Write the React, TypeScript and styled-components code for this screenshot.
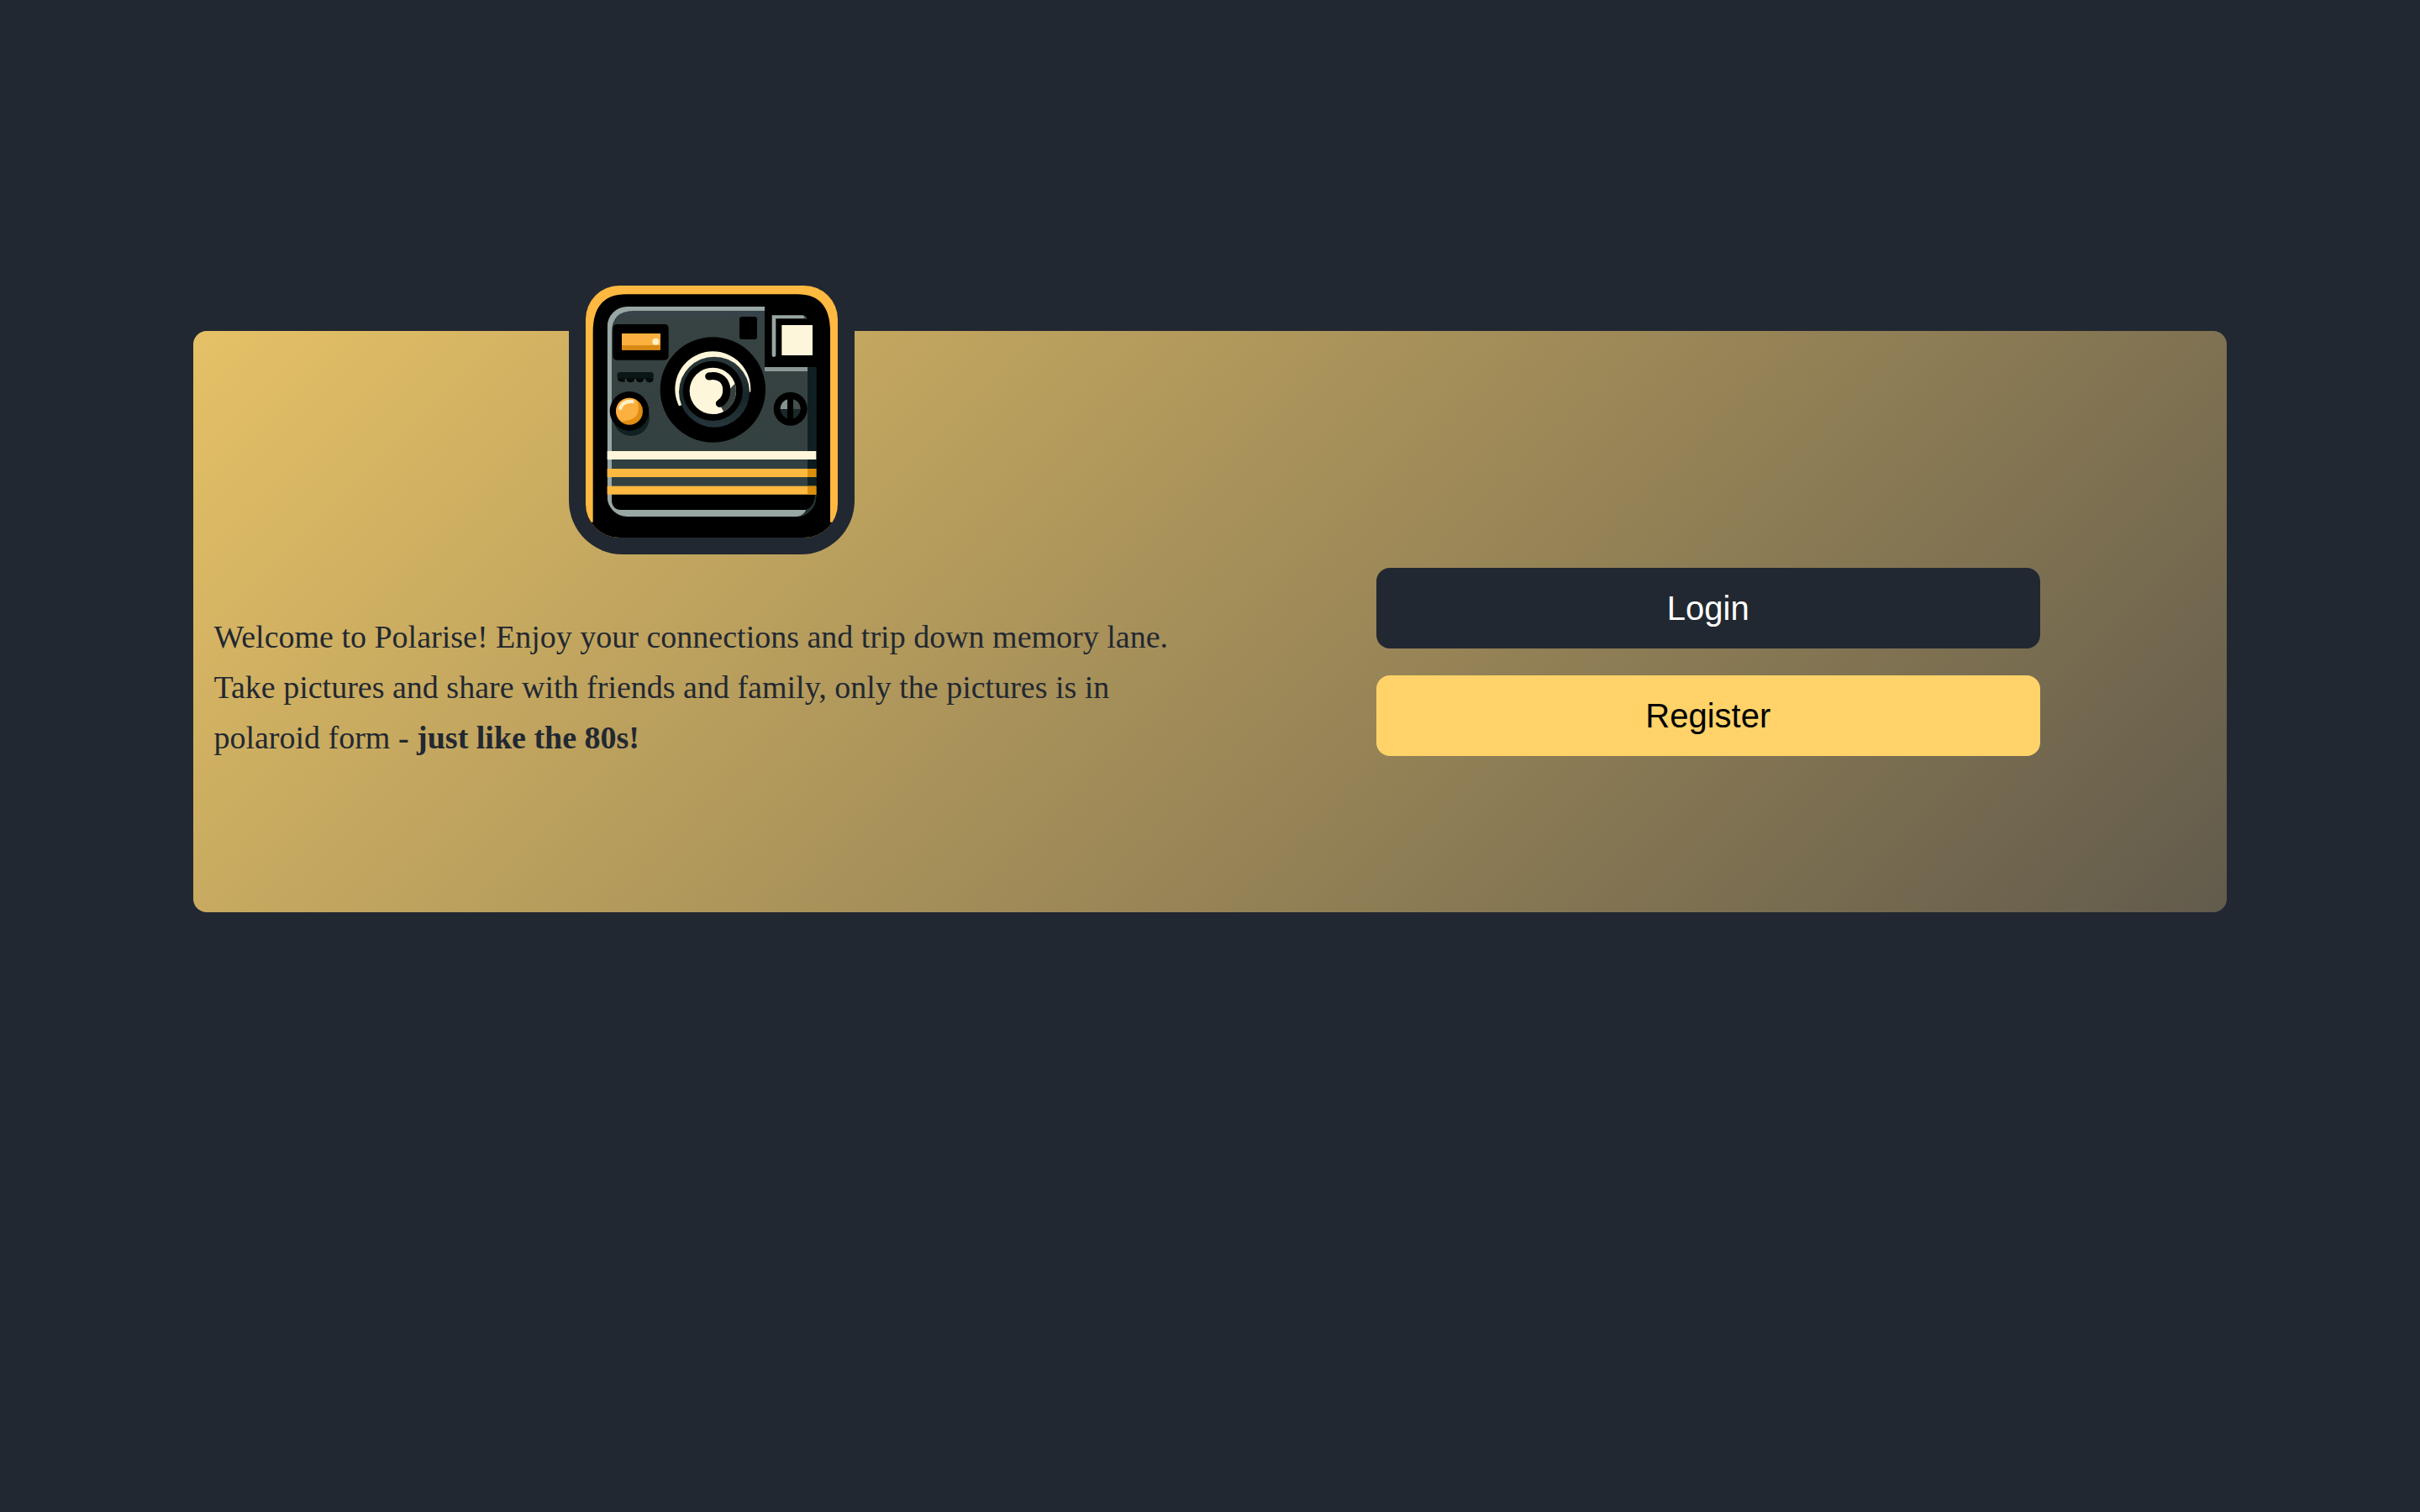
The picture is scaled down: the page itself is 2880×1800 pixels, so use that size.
import React from "react";
import styled, { createGlobalStyle } from "styled-components";

const colors = {
  night: "#222831",
  sun: "#ffd369",
  white: "#ffffff",
  black: "#000000",
};

const GlobalStyle = createGlobalStyle`
  *, *::before, *::after { box-sizing: border-box; }
  body { margin: 0; background: ${colors.night}; }
`;

const Page = styled.main`
  min-height: 100vh;
  padding: 394px 8% 64px;
`;

const Card = styled.section`
  display: grid;
  grid-template-columns: 1fr 1fr;
  padding: 0 24px;
  border-radius: 16px;
  background: linear-gradient(135deg, #e5c166 0%, #625b4c 100%);
`;

const Intro = styled.div`
  display: flex;
  flex-direction: column;
  align-items: center;
  padding-bottom: 178px;
`;

const LogoFrame = styled.div`
  margin: -74px 0 68px;
  padding: 20px;
  border-radius: 64px;
  background: ${colors.night};
`;

const LogoArt = styled.svg`
  display: block;
  width: 300px;
  height: 300px;
  border-radius: 40px;
`;

const Welcome = styled.p`
  align-self: stretch;
  margin: 0;
  color: ${colors.night};
  font: 400 38px/60px "Liberation Serif", "Times New Roman", serif;
`;

const Actions = styled.nav`
  display: flex;
  flex-direction: column;
  align-items: center;
  justify-content: center;
  gap: 32px;
  padding-top: 96px;
`;

const ActionButton = styled.button<{ $primary?: boolean }>`
  width: 66.667%;
  padding: 18px 24px;
  border: 0;
  border-radius: 16px;
  background: ${(p) => (p.$primary ? colors.sun : colors.night)};
  color: ${(p) => (p.$primary ? colors.black : colors.white)};
  font: 400 40px/60px "Liberation Sans", Arial, sans-serif;
  cursor: pointer;
`;

function CameraLogo() {
  return (
    <LogoArt viewBox="111 60 900 900" role="img" aria-label="Polarise camera">
      <defs>
        <linearGradient id="body" x1="0" y1="0" x2="0" y2="1">
          <stop offset="0" stopColor="#37434a" />
          <stop offset="0.06" stopColor="#374242" />
          <stop offset="1" stopColor="#334040" />
        </linearGradient>
        <linearGradient id="ring" x1="0" y1="0" x2="0" y2="1">
          <stop offset="0" stopColor="#2c393c" />
          <stop offset="0.6" stopColor="#17262a" />
          <stop offset="1" stopColor="#26363c" />
        </linearGradient>
        <clipPath id="shell">
          <rect x="188" y="135" width="746" height="750" rx="72" />
        </clipPath>
        <clipPath id="shine">
          <path d="M400 280 H720 V440 H570 L446 490 H400 Z" />
        </clipPath>
        <clipPath id="glass">
          <circle cx="565" cy="436" r="83" />
        </clipPath>
        <clipPath id="dial">
          <circle cx="842" cy="500" r="36" />
        </clipPath>
      </defs>

      <rect x="111" y="60" width="900" height="900" fill="#ffb940" />
      <path d="M137 225 Q137 91 255 91 H867 Q984 91 984 225 V905 H1011 V960 H111 V905 H137 Z" fill="#000" />

      {/* shell with its light rim */}
      <g clipPath="url(#shell)">
        <rect x="188" y="135" width="746" height="750" fill="#99a7a4" />
        <path d="M204 228 Q204 150 282 150 H934 V822 Q934 861 895 861 H240 Q204 861 204 822 Z" fill="url(#body)" />
        <rect x="903" y="350" width="31" height="540" fill="#102022" />
        <path d="M204 806 H932 Q930 861 895 861 H240 Q204 861 204 822 Z" fill="#000" />
        <path d="M862 887 Q888 882 898 861 Q928 848 930 806 H940 V890 Z" fill="#22302f" />
      </g>

      {/* stripes */}
      <rect x="204" y="681" width="699" height="34" fill="#323f41" />
      <rect x="903" y="681" width="31" height="34" fill="#0d1a20" />
      <rect x="188" y="651" width="746" height="30" fill="#fef6da" />
      <rect x="188" y="714" width="746" height="30" fill="#ffb940" />
      <rect x="903" y="714" width="31" height="30" fill="#dc8f0c" />
      <rect x="188" y="776" width="746" height="30" fill="#ffb940" />
      <rect x="903" y="776" width="31" height="30" fill="#dc8f0c" />

      {/* viewfinder corner */}
      <rect x="750" y="125" width="190" height="226" fill="#000" />
      <rect x="750" y="351" width="153" height="15" fill="#8b9896" />
      <path d="M776 166 H885 Q897 168 900 178 H790 V310 Q788 315 782 315 Q776 315 776 308 Z" fill="#98a5a3" />
      <path d="M889 168 Q897 170 900 178 H892 Z" fill="#3d4a49" />
      <rect x="811" y="201" width="110" height="108" fill="#fef6da" />
      <rect x="660" y="171" width="63" height="81" rx="10" fill="#000" />

      {/* flash window */}
      <rect x="208" y="198" width="199" height="128" rx="14" fill="#000" />
      <rect x="240" y="231" width="138" height="59" fill="#fcb040" />
      <rect x="240" y="273" width="138" height="17" fill="#d98a14" />
      <circle cx="361" cy="260" r="12" fill="#fff0c4" />

      {/* speaker grille */}
      <rect x="223" y="369" width="131" height="24" rx="12" fill="#0b1717" />
      <path d="M224 391 H251 V404 H240 Q226 404 224 391 Z M256 391 H286 Q285 406 271 406 Q257 406 256 391 Z M290 391 H319 Q318 406 305 406 Q291 406 290 391 Z M324 391 H354 Q353 406 339 406 Q325 406 324 391 Z" fill="#050b0b" />

      {/* shutter button */}
      <circle cx="274" cy="532" r="65" fill="#112022" />
      <circle cx="267" cy="508" r="70" fill="#000" />
      <circle cx="267" cy="509" r="48" fill="#e08d12" />
      <path d="M219 507 A48 48 0 0 1 292 468 Q302 480 298 510 Q294 540 240 545 Q220 530 219 507 Z" fill="#fcb040" />
      <path d="M235 498 Q243 471 278 474" fill="none" stroke="#fff0c4" strokeWidth="13" strokeLinecap="round" />

      {/* lens */}
      <circle cx="565" cy="432" r="188" fill="#000" />
      <circle cx="565" cy="430" r="135" fill="#fef6da" clipPath="url(#shine)" />
      <circle cx="570" cy="440" r="126" fill="url(#ring)" />
      <circle cx="565" cy="436" r="107" fill="#000" />
      <circle cx="565" cy="436" r="83" fill="#fef6da" />
      <g clipPath="url(#glass)">
        <path d="M626 428 L655 400 V530 H610 L588 484 Z" fill="#36403f" />
        <path d="M586 480 L604 511 L590 535 H560 L570 480 Z" fill="#fef6da" />
      </g>
      <path d="M551 384 C592 376 613 402 614 430 C615 458 605 472 589 481" fill="none" stroke="#000" strokeWidth="27" strokeLinecap="round" />

      {/* mode dial */}
      <circle cx="842" cy="500" r="60" fill="#000" />
      <g clipPath="url(#dial)">
        <rect x="800" y="460" width="42" height="41" fill="#84918f" />
        <rect x="842" y="460" width="42" height="41" fill="#44514f" />
        <rect x="800" y="501" width="84" height="40" fill="#1a2829" />
      </g>
      <rect x="831" y="460" width="21" height="80" fill="#000" />
    </LogoArt>
  );
}

export default function App() {
  return (
    <>
      <GlobalStyle />
      <Page>
        <Card>
          <Intro>
            <LogoFrame>
              <CameraLogo />
            </LogoFrame>
            <Welcome>
              Welcome to Polarise! Enjoy your connections and trip down memory lane. Take pictures and share with
              friends and family, only the pictures is in polaroid form <strong>- just like the 80s!</strong>
            </Welcome>
          </Intro>
          <Actions aria-label="Account">
            <ActionButton type="button">Login</ActionButton>
            <ActionButton type="button" $primary>
              Register
            </ActionButton>
          </Actions>
        </Card>
      </Page>
    </>
  );
}
